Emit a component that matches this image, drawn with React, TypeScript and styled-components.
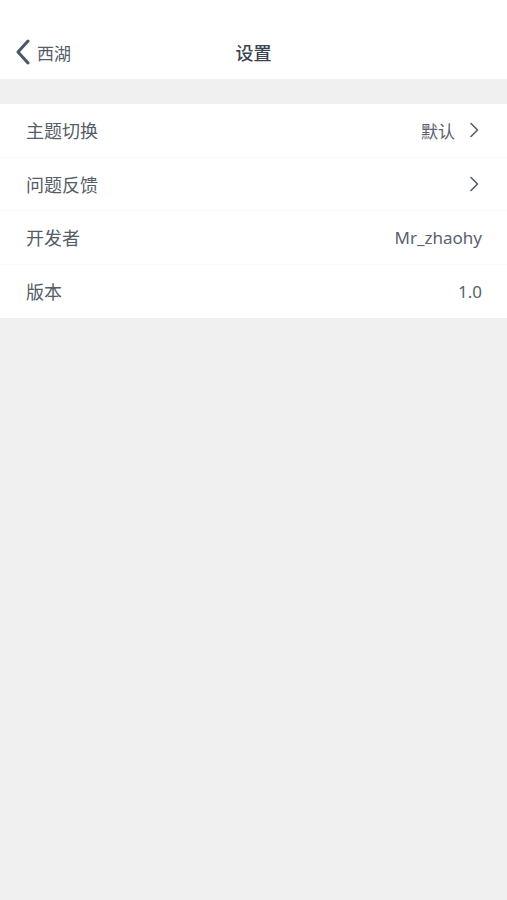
import React from "react";
import styled, { createGlobalStyle } from "styled-components";

const GlobalStyle = createGlobalStyle`
  html, body {
    margin: 0;
    padding: 0;
    background: #f0f0f0;
    font-family: "Noto Sans", "Noto Sans CJK SC", sans-serif;
  }
`;

interface SettingItem {
  label: string;
  value?: string;
  arrow?: boolean;
}

const items: SettingItem[] = [
  { label: "主题切换", value: "默认", arrow: true },
  { label: "问题反馈", arrow: true },
  { label: "开发者", value: "Mr_zhaohy" },
  { label: "版本", value: "1.0" },
];

const Chevron = () => (
  <svg width="10" height="16" viewBox="0 0 10 16" fill="none">
    <path d="M2 1.5 L8.5 8 L2 14.5" stroke="#555d67" strokeWidth="1.6" strokeLinecap="round" strokeLinejoin="round" />
  </svg>
);

const App: React.FC = () => {
  return (
    <Page>
      <GlobalStyle />
      <Header>
        <Back>
          <svg width="18" height="26" viewBox="0 0 18 26" fill="none">
            <path d="M14 2 L4 13 L14 24" stroke="#4b5568" strokeWidth="3" strokeLinecap="round" strokeLinejoin="round" />
          </svg>
          <span>西湖</span>
        </Back>
        <Title>设置</Title>
      </Header>
      <List>
        {items.map((item) => (
          <Row key={item.label} $arrow={!!item.arrow}>
            <Label>{item.label}</Label>
            <Right>
              {item.value && <Value>{item.value}</Value>}
              {item.arrow && <Chevron />}
            </Right>
          </Row>
        ))}
      </List>
    </Page>
  );
};

export default App;

const Page = styled.div`
  min-height: 900px;
  background: #f0f0f0;
`;

const Header = styled.div`
  position: relative;
  height: 79px;
  background: #ffffff;
  display: flex;
  align-items: center;
  justify-content: center;
  padding-top: 24px;
  box-sizing: border-box;
`;

const Back = styled.div`
  position: absolute;
  left: 14px;
  top: 39px;
  display: flex;
  align-items: center;
  gap: 5px;
  color: #555d6b;
  font-size: 17px;
`;

const Title = styled.div`
  font-size: 18px;
  color: #3b4353;
  font-weight: 500;
`;

const List = styled.div`
  margin-top: 25px;
  background: #ffffff;
`;

const Row = styled.div<{ $arrow: boolean }>`
  height: 53.5px;
  box-sizing: border-box;
  display: flex;
  align-items: center;
  justify-content: space-between;
  padding: 0 ${(p) => (p.$arrow ? 28 : 25)}px 0 26px;
  border-bottom: 1px solid #f8f9fa;
  color: #555d67;
  font-size: 18px;

  &:last-child {
    border-bottom: none;
  }
`;

const Label = styled.span``;

const Right = styled.div`
  display: flex;
  align-items: center;
  gap: 14px;
`;

const Value = styled.span`
  font-size: 17px;
  color: #5a6270;
`;
